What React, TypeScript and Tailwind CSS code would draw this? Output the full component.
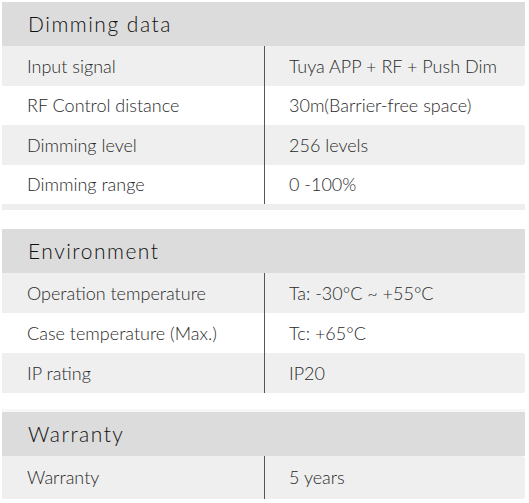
import React from "react";

type Row = { label: string; value: string; shade: boolean; h: string };

const SECTIONS: { title: string; rows: Row[]; tail: string }[] = [
  {
    title: "Dimming data",
    rows: [
      { label: "Input signal", value: "Tuya APP + RF + Push Dim", shade: true, h: "h-[40px]" },
      { label: "RF Control distance", value: "30m(Barrier-free space)", shade: false, h: "h-[39px]" },
      { label: "Dimming level", value: "256 levels", shade: true, h: "h-[40px]" },
      { label: "Dimming range", value: "0 -100%", shade: false, h: "h-[39px]" },
    ],
    tail: "h-[6px] bg-[#eeeeee]",
  },
  {
    title: "Environment",
    rows: [
      { label: "Operation temperature", value: "Ta: -30°C ~ +55°C", shade: true, h: "h-[40px]" },
      { label: "Case temperature (Max.)", value: "Tc: +65°C", shade: false, h: "h-[40px]" },
      { label: "IP rating", value: "IP20", shade: true, h: "h-[40px]" },
    ],
    tail: "h-0",
  },
  {
    title: "Warranty",
    rows: [{ label: "Warranty", value: "5 years", shade: true, h: "h-[43px]" }],
    tail: "h-0",
  },
];

function Section({ title, rows, tail }: { title: string; rows: Row[]; tail: string }) {
  return (
    <div className="flex flex-col">
      {/* Header band */}
      <div className="h-[44px] bg-[#dcdcdc] flex items-center pl-[26px] text-[21px] font-light tracking-[1.5px] text-[#111]">
        {title}
      </div>
      {rows.map((r) => (
        <div
          key={r.label}
          className={`grid grid-cols-[262px_1fr] ${r.h} ${r.shade ? "bg-[#efefef] rounded-r-[3px]" : "bg-white"}`}
        >
          <div className="flex items-center pl-[25px] text-[18px] font-light text-[#2a2a2a]">{r.label}</div>
          <div className="flex items-center pl-[24px] border-l border-[#555] text-[18px] font-light text-[#2a2a2a]">
            {r.value}
          </div>
        </div>
      ))}
      <div className={tail} />
    </div>
  );
}

export default function App() {
  return (
    <div
      className="w-[529px] h-[503px] bg-white pt-[2px] pl-[2px] pr-[4px] overflow-hidden"
      style={{ fontFamily: "Lato, 'Open Sans', sans-serif" }}
    >
      <Section {...SECTIONS[0]} />
      <div className="h-[19px]" />
      <Section {...SECTIONS[1]} />
      <div className="h-[19px] flex flex-col justify-end">
        <div className="h-[3px] bg-[#f7f7f7]" />
      </div>
      <Section {...SECTIONS[2]} />
    </div>
  );
}
